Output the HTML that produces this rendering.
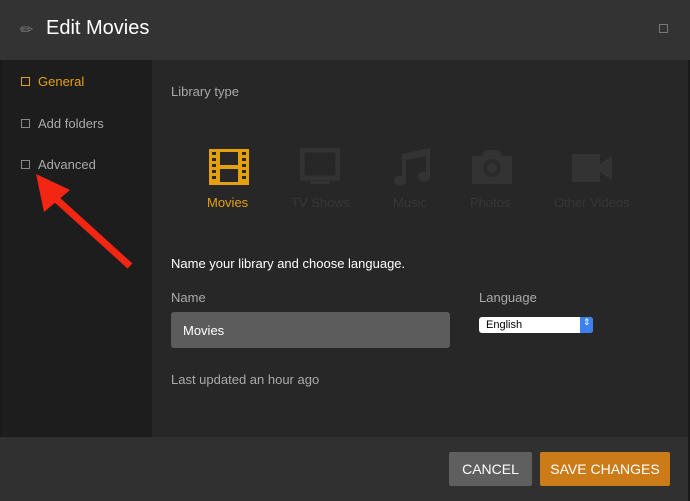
<!DOCTYPE html>
<html><head><style>
body{margin:0;width:690px;height:501px;overflow:hidden;background:#1a1a1a;font-family:"Liberation Sans",sans-serif;position:relative}
.hdr{position:absolute;left:0;top:0;width:690px;height:60px;background:#333}
.side{position:absolute;left:2px;top:60px;width:150px;height:377px;background:#1d1d1d}
.main{position:absolute;left:152px;top:60px;width:536px;height:377px;background:#272727}
.foot{position:absolute;left:0;top:437px;width:688px;height:64px;background:#303030}
.t{position:absolute;white-space:nowrap}
.cb{position:absolute;width:7px;height:7px;border:1.5px solid #888}
</style></head><body>
<div class="hdr"></div>
<div class="side"></div>
<div class="main"></div>
<div class="foot"></div>
<div class="t" style="left:20px;top:20px;color:#777;font-size:16px">✏</div>
<div class="t" style="left:46px;top:17px;color:#fff;font-size:20px">Edit Movies</div>
<div class="cb" style="left:659px;top:24px;border-color:#777"></div>
<div class="cb" style="left:21px;top:77px;border-color:#e5a00d"></div>
<div class="t" style="left:38px;top:74px;color:#e5a00d;font-size:13px">General</div>
<div class="cb" style="left:21px;top:119px"></div>
<div class="t" style="left:38px;top:116px;color:#aaa;font-size:13px">Add folders</div>
<div class="cb" style="left:21px;top:160px"></div>
<div class="t" style="left:38px;top:157px;color:#aaa;font-size:13px">Advanced</div>
<div class="t" style="left:171px;top:84px;color:#aaa;font-size:13px">Library type</div>
<svg style="position:absolute;left:209px;top:149px" width="40" height="36" viewBox="0 0 40 36">
<rect x="0" y="0" width="40" height="36" fill="#e5a00d"/>
<rect x="11" y="3" width="18" height="13" fill="#272727"/><rect x="11" y="20" width="18" height="13" fill="#272727"/>
<g fill="#272727"><rect x="3" y="3" width="4" height="3"/><rect x="3" y="9" width="4" height="3"/><rect x="3" y="15" width="4" height="3"/><rect x="3" y="21" width="4" height="3"/><rect x="3" y="27" width="4" height="3"/>
<rect x="33" y="3" width="4" height="3"/><rect x="33" y="9" width="4" height="3"/><rect x="33" y="15" width="4" height="3"/><rect x="33" y="21" width="4" height="3"/><rect x="33" y="27" width="4" height="3"/></g></svg>
<div class="t" style="left:207px;top:195px;color:#e5a00d;font-size:13px">Movies</div>
<svg style="position:absolute;left:300px;top:148px" width="40" height="38"><rect x="2" y="2" width="36" height="28" fill="none" stroke="#333" stroke-width="5"/><rect x="10" y="33" width="20" height="3" fill="#333"/></svg>
<div class="t" style="left:291px;top:195px;color:#363636;font-size:13px">TV Shows</div>
<svg style="position:absolute;left:392px;top:146px" width="40" height="40"><path d="M10 8 L38 2 V30 A6 5 0 1 1 34 26 V10 L14 14 V34 A6 5 0 1 1 10 30Z" fill="#333"/></svg>
<div class="t" style="left:393px;top:195px;color:#363636;font-size:13px">Music</div>
<svg style="position:absolute;left:472px;top:148px" width="40" height="36"><path d="M0 8 H10 L13 2 H27 L30 8 H40 V36 H0Z" fill="#333"/><circle cx="20" cy="20" r="9" fill="#2a2a2a"/><circle cx="20" cy="20" r="5" fill="#333"/></svg>
<div class="t" style="left:470px;top:195px;color:#363636;font-size:13px">Photos</div>
<svg style="position:absolute;left:572px;top:152px" width="42" height="32"><rect x="0" y="2" width="28" height="28" fill="#333"/><path d="M28 12 L40 4 V28 L28 20Z" fill="#333"/></svg>
<div class="t" style="left:554px;top:195px;color:#363636;font-size:13px">Other Videos</div>
<div class="t" style="left:171px;top:256px;color:#fff;font-size:13px">Name your library and choose language.</div>
<div class="t" style="left:171px;top:290px;color:#aaa;font-size:13px">Name</div>
<div class="t" style="left:479px;top:290px;color:#aaa;font-size:13px">Language</div>
<div style="position:absolute;left:171px;top:312px;width:279px;height:36px;background:#5c5c5c;border-radius:3px"></div>
<div class="t" style="left:183px;top:323px;color:#fff;font-size:13px">Movies</div>
<div style="position:absolute;left:479px;top:317px;width:114px;height:16px;background:#fff;border-radius:3px;overflow:hidden"><div style="position:absolute;right:0;top:0;width:13px;height:16px;background:#3b82f0"></div></div>
<div class="t" style="left:486px;top:319px;color:#000;font-size:11px">English</div>
<div class="t" style="left:583px;top:317px;color:#fff;font-size:9px">⇕</div>
<div class="t" style="left:171px;top:372px;color:#aaa;font-size:13px">Last updated an hour ago</div>
<div style="position:absolute;left:449px;top:452px;width:83px;height:34px;background:#5f5f5f;border-radius:2px;color:#fff;font-size:14px;text-align:center;line-height:34px">CANCEL</div>
<div style="position:absolute;left:540px;top:452px;width:130px;height:34px;background:#cc7b19;border-radius:2px;color:#fff;font-size:14px;text-align:center;line-height:34px">SAVE CHANGES</div>
<svg style="position:absolute;left:0;top:0" width="690" height="501"><line x1="130" y1="266" x2="55" y2="198" stroke="#f22613" stroke-width="7"/><polygon points="36,174 70,190 44,212" fill="#f22613"/></svg>
</body></html>
